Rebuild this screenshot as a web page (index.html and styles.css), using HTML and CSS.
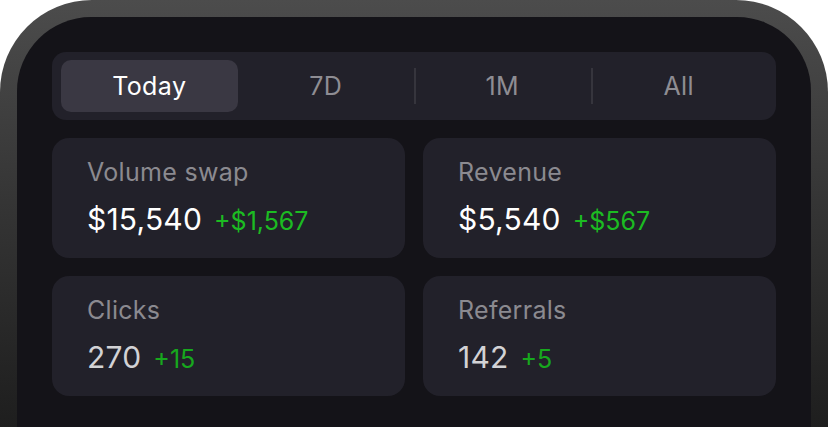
FILE: index.html
```html
<!DOCTYPE html>
<html>
<head>
<meta charset="utf-8">
<link rel="stylesheet" href="styles.css">
</head>
<body>
<div class="phone">
  <div class="screen">
    <div class="tabs">
      <div class="tab active">Today</div>
      <div class="tab">7D</div>
      <div class="tab sep">1M</div>
      <div class="tab sep">All</div>
    </div>
    <div class="cards">
      <div class="card">
        <div class="label">Volume swap</div>
        <div class="row"><span class="value">$15,540</span><span class="delta">+$1,567</span></div>
      </div>
      <div class="card">
        <div class="label">Revenue</div>
        <div class="row"><span class="value">$5,540</span><span class="delta">+$567</span></div>
      </div>
      <div class="card low">
        <div class="label">Clicks</div>
        <div class="row"><span class="value">270</span><span class="delta">+15</span></div>
      </div>
      <div class="card low">
        <div class="label">Referrals</div>
        <div class="row"><span class="value">142</span><span class="delta">+5</span></div>
      </div>
    </div>
  </div>
</div>
</body>
</html>
```

FILE: styles.css
```css
html, body {
  margin: 0;
  padding: 0;
  background: #ffffff;
  overflow: hidden;
  width: 828px;
  height: 427px;
}
body {
  font-family: Inter, "Noto Sans", sans-serif;
}
.phone {
  width: 828px;
  height: 427px;
  box-sizing: border-box;
  padding: 17px 17px 0 17px;
  border-radius: 92px 92px 0 0;
  background: linear-gradient(to bottom, #4c4c4c 0%, #363636 45%, #1e1e1e 100%);
}
.screen {
  height: 100%;
  box-sizing: border-box;
  border-radius: 74px 74px 0 0;
  background: #141318;
  padding: 35px 35px 0 35px;
  display: flex;
  flex-direction: column;
  gap: 18px;
}
.tabs {
  height: 68px;
  box-sizing: border-box;
  background: #22212a;
  border-radius: 14px;
  padding: 8px 9px;
  display: grid;
  grid-template-columns: repeat(4, 1fr);
}
.tab {
  position: relative;
  display: flex;
  align-items: center;
  justify-content: center;
  font-size: 25px;
  letter-spacing: 0.4px;
  color: #8e8d93;
  border-radius: 10px;
}
.tab.active {
  background: #3a3843;
  color: #ffffff;
}
.tab.sep::before {
  content: "";
  position: absolute;
  left: 0;
  top: 8px;
  bottom: 8px;
  width: 2px;
  background: #36353d;
}
.cards {
  display: grid;
  grid-template-columns: 1fr 1fr;
  gap: 18px;
}
.card {
  height: 120px;
  box-sizing: border-box;
  background: #22212a;
  border-radius: 17px;
  padding: 18px 35px 0 35px;
}
.label {
  font-size: 25px;
  letter-spacing: 0.3px;
  line-height: 32px;
  color: #8b8a90;
}
.row {
  margin-top: 13px;
  display: flex;
  align-items: baseline;
  gap: 12px;
}
.value {
  font-size: 30px;
  letter-spacing: 0.2px;
  line-height: 36px;
  color: #ffffff;
}
.delta {
  font-size: 25px;
  color: #1cbb22;
}
.low .value {
  color: #d2d2d5;
}
.low .delta {
  color: #17a81d;
}
```
